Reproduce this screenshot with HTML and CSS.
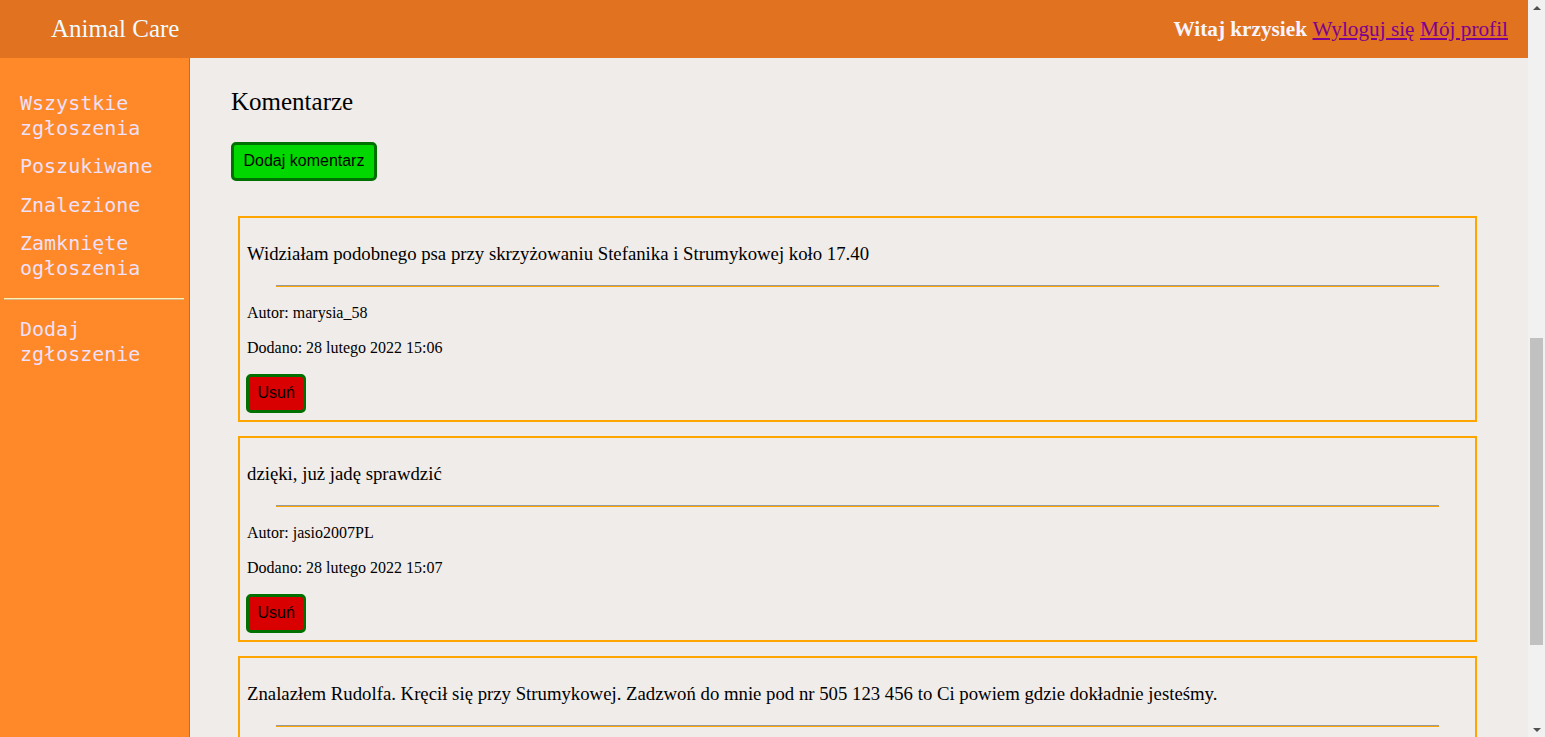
FILE: index.html
```html
<!DOCTYPE html>
<html lang="pl">
<head>
<meta charset="utf-8">
<title>Animal Care</title>
<link rel="stylesheet" href="styles.css">
</head>
<body>
<div class="app">
  <header class="topbar">
    <div class="brand">Animal Care</div>
    <div class="user">
      <strong class="greet">Witaj krzysiek</strong>
      <a href="#" class="link">Wyloguj się</a>
      <a href="#" class="link">Mój profil</a>
    </div>
  </header>
  <div class="layout">
    <nav class="sidebar">
      <a href="#" class="nav-item">Wszystkie zgłoszenia</a>
      <a href="#" class="nav-item">Poszukiwane</a>
      <a href="#" class="nav-item">Znalezione</a>
      <a href="#" class="nav-item">Zamknięte ogłoszenia</a>
      <hr class="nav-sep">
      <a href="#" class="nav-item">Dodaj zgłoszenie</a>
    </nav>
    <main class="content">
      <h2 class="section-title">Komentarze</h2>
      <button class="btn btn-add">Dodaj komentarz</button>
      <div class="comments">
        <div class="comment">
          <p class="comment-text">Widziałam podobnego psa przy skrzyżowaniu Stefanika i Strumykowej koło 17.40</p>
          <hr class="comment-sep">
          <p class="meta">Autor: marysia_58</p>
          <p class="meta">Dodano: 28 lutego 2022 15:06</p>
          <button class="btn btn-del">Usuń</button>
        </div>
        <div class="comment">
          <p class="comment-text">dzięki, już jadę sprawdzić</p>
          <hr class="comment-sep">
          <p class="meta">Autor: jasio2007PL</p>
          <p class="meta">Dodano: 28 lutego 2022 15:07</p>
          <button class="btn btn-del">Usuń</button>
        </div>
        <div class="comment">
          <p class="comment-text">Znalazłem Rudolfa. Kręcił się przy Strumykowej. Zadzwoń do mnie pod nr 505 123 456 to Ci powiem gdzie dokładnie jesteśmy.</p>
          <hr class="comment-sep">
        </div>
      </div>
    </main>
  </div>
</div>
<div class="scrollbar" aria-hidden="true">
  <div class="sb-btn"><span class="arrow-up"></span></div>
  <div class="sb-track"><div class="sb-thumb"></div></div>
  <div class="sb-btn"><span class="arrow-down"></span></div>
</div>
</body>
</html>
```
FILE: styles.css
```css
html, body {
  margin: 0;
  padding: 0;
}
body {
  font-family: "Liberation Serif", "Times New Roman", serif;
  background: #f0ece9;
  color: #000;
  height: 100vh;
  overflow: hidden;
  display: flex;
}
.app {
  flex: 1;
  min-width: 0;
  display: flex;
  flex-direction: column;
}
.topbar {
  height: 58px;
  flex: 0 0 58px;
  background: #e07220;
  display: flex;
  align-items: center;
  justify-content: space-between;
  padding: 0 20px 0 51px;
}
.brand {
  font-size: 25px;
  color: #f0fbff;
}
.user {
  font-size: 21.25px;
  color: #f8f4ff;
  display: flex;
  gap: 5.5px;
  align-items: baseline;
}
.greet {
  font-weight: bold;
}
.link {
  color: #7d0090;
}
.layout {
  flex: 1;
  min-height: 0;
  display: flex;
}
.sidebar {
  width: 189px;
  flex: 0 0 189px;
  background: #ff8828;
  border-right: 1px solid #c96a1e;
  padding-top: 26px;
  display: flex;
  flex-direction: column;
}
.nav-item {
  display: block;
  padding: 6.75px 20px;
  font-family: "DejaVu Sans Mono", monospace;
  font-size: 20px;
  line-height: 25px;
  color: #f0e0f8;
  text-decoration: none;
}
.nav-sep {
  margin: 10px 5px 10px 4px;
  border: 0;
  border-top: 1px solid #fff2b0;
  border-bottom: 1px solid #d8b48a;
  height: 0;
}
.content {
  flex: 1;
  min-width: 0;
  overflow: hidden;
  padding: 30px 51px 0 41px;
}
.section-title {
  margin: 0;
  font-size: 25px;
  line-height: 28px;
  font-weight: normal;
}
.btn {
  font-family: "Liberation Sans", Arial, sans-serif;
  font-size: 16px;
  line-height: 18px;
  color: #000;
  border: 3px solid #007000;
  border-radius: 5px;
  padding: 7px 8px 8px;
  cursor: pointer;
}
.btn-add {
  margin-top: 26px;
  padding-left: 9.5px;
  padding-right: 9.5px;
  background: #00d800;
}
.btn-del {
  background: #d80000;
  margin-left: -1px;
  padding-left: 8.5px;
}
.comments {
  margin: 35px 0 0 7px;
  display: flex;
  flex-direction: column;
  gap: 14px;
}
.comment {
  border: 2px solid #ffa500;
  padding: 7px;
}
.comment-text {
  margin: 18px 0 0;
  font-size: 18.75px;
  line-height: 21px;
}
.comment-sep {
  width: 95.3%;
  margin: 21px auto 17px;
  border: 0;
  border-top: 1px solid #9a9a9a;
  border-bottom: 1px solid #ffa500;
  height: 0;
}
.meta {
  margin: 0 0 17px;
  font-size: 16px;
  line-height: 18px;
}
.scrollbar {
  width: 17px;
  flex: 0 0 17px;
  background: #f1f1f1;
  display: flex;
  flex-direction: column;
}
.sb-btn {
  height: 15px;
  flex: 0 0 15px;
  display: flex;
  align-items: center;
  justify-content: center;
}
.arrow-up {
  width: 0;
  height: 0;
  border-left: 4px solid transparent;
  border-right: 4px solid transparent;
  border-bottom: 4px solid #505050;
}
.arrow-down {
  width: 0;
  height: 0;
  border-left: 4px solid transparent;
  border-right: 4px solid transparent;
  border-top: 4px solid #505050;
}
.sb-track {
  flex: 1;
  padding: 0 2px;
}
.sb-thumb {
  margin-top: 323px;
  height: 307px;
  background: #c1c1c1;
}
```
